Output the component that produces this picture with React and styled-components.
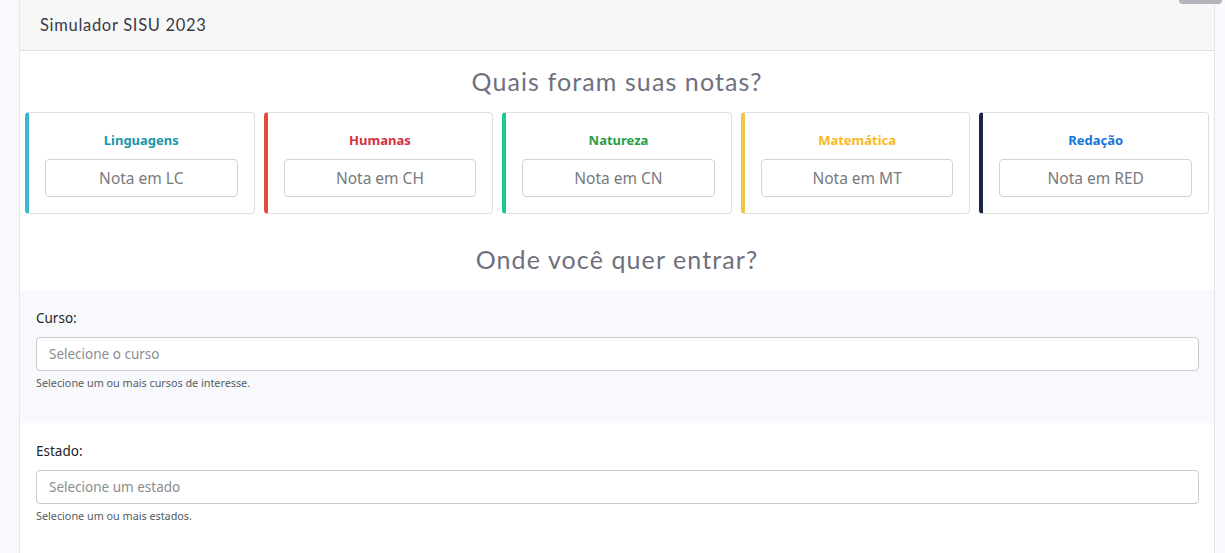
import React from "react";
import styled, { createGlobalStyle } from "styled-components";

const GlobalStyle = createGlobalStyle`
  * { box-sizing: border-box; }
  html, body { margin: 0; padding: 0; }
  body {
    background: #f8f9fc;
    font-family: "Open Sans", "Noto Sans", sans-serif;
    color: #212529;
    overflow: hidden;
  }
`;

const Page = styled.div`
  position: relative;
  height: 553px;
  padding: 0 10px 0 19px;
`;

const ScrollTab = styled.div`
  position: absolute;
  top: -4px;
  right: 3px;
  width: 43px;
  height: 8px;
  border-radius: 4px;
  background: #b3b3ba;
`;

const Card = styled.div`
  background: #fff;
  border: 1px solid #e3e6f0;
  border-top: none;
  height: 100%;
`;

const CardHeader = styled.div`
  height: 51px;
  background: #f7f7f7;
  border-bottom: 1px solid #dedede;
  display: flex;
  align-items: center;
  padding: 0 20px;
  font-family: "Lato", "Open Sans", sans-serif;
  font-size: 16.5px;
  color: #3a3b45;
  letter-spacing: 0.7px;
`;

const SectionTitle = styled.h2`
  margin: 0;
  text-align: center;
  font-family: "Lato", "Open Sans", sans-serif;
  font-weight: 400;
  font-size: 25px;
  letter-spacing: 1.1px;
  color: #6e707e;
  padding: ${(p) => p.$pad};
  line-height: 30px;
`;

const ScoreRow = styled.div`
  display: grid;
  grid-template-columns: repeat(5, 1fr);
  gap: 9px;
  padding: 0 5px;
`;

const ScoreCard = styled.div`
  border: 1px solid #dddfe2;
  border-left: 4px solid ${(p) => p.$accent};
  border-radius: 4px;
  padding: 17px 16px 16px 16px;
  display: flex;
  flex-direction: column;
  align-items: center;
`;

const ScoreTitle = styled.div`
  font-family: "Noto Sans", "Open Sans", sans-serif;
  font-weight: 700;
  font-size: 13px;
  line-height: 20px;
  color: ${(p) => p.$color};
  margin-bottom: 9px;
`;

const ScoreInput = styled.input`
  width: 100%;
  height: 38px;
  border: 1px solid #ced4da;
  border-radius: 4px;
  text-align: center;
  font-family: "Noto Sans", "Open Sans", sans-serif;
  font-size: 15.5px;
  color: #495057;
  background: #fff;
  &::placeholder { color: #777a7d; }
`;

const FormSection = styled.div`
  background: ${(p) => (p.$shaded ? "#f8f9fc" : "#fff")};
  padding: 18px 15px 16px 16px;
`;

const FieldGroup = styled.div`
  margin-bottom: 16px;
  display: flex;
  flex-direction: column;
`;

const Label = styled.label`
  font-family: "Noto Sans", "Open Sans", sans-serif;
  font-size: 13.5px;
  line-height: 21px;
  color: #212529;
  margin-bottom: 8px;
`;

const SelectBox = styled.input`
  width: 100%;
  height: 34px;
  border: 1px solid #c8cbcf;
  border-radius: 4px;
  padding: 0 12px;
  font-family: "Noto Sans", "Open Sans", sans-serif;
  font-size: 13.5px;
  background: #fff;
  &::placeholder { color: #8a8d91; }
`;

const Help = styled.small`
  font-family: "Noto Sans", "Open Sans", sans-serif;
  font-size: 10.8px;
  line-height: 16px;
  color: #555b62;
  margin-top: 4px;
`;

const scores = [
  { title: "Linguagens", accent: "#36b9cc", color: "#1b95a8", ph: "Nota em LC" },
  { title: "Humanas", accent: "#e74a3b", color: "#d1323f", ph: "Nota em CH" },
  { title: "Natureza", accent: "#1cc88a", color: "#2a9d45", ph: "Nota em CN" },
  { title: "Matemática", accent: "#f0c34a", color: "#f7b924", ph: "Nota em MT" },
  { title: "Redação", accent: "#1b2545", color: "#1575dc", ph: "Nota em RED" },
];

export default function App() {
  return (
    <>
      <GlobalStyle />
      <Page>
        <ScrollTab />
        <Card>
          <CardHeader>Simulador SISU 2023</CardHeader>
          <SectionTitle $pad="15px 0 16px">Quais foram suas notas?</SectionTitle>
          <ScoreRow>
            {scores.map((s) => (
              <ScoreCard key={s.title} $accent={s.accent}>
                <ScoreTitle $color={s.color}>{s.title}</ScoreTitle>
                <ScoreInput placeholder={s.ph} />
              </ScoreCard>
            ))}
          </ScoreRow>
          <SectionTitle $pad="30px 0 16px">Onde você quer entrar?</SectionTitle>
          <FormSection $shaded>
            <FieldGroup>
              <Label>Curso:</Label>
              <SelectBox placeholder="Selecione o curso" />
              <Help>Selecione um ou mais cursos de interesse.</Help>
            </FieldGroup>
          </FormSection>
          <FormSection>
            <FieldGroup>
              <Label>Estado:</Label>
              <SelectBox placeholder="Selecione um estado" />
              <Help>Selecione um ou mais estados.</Help>
            </FieldGroup>
          </FormSection>
        </Card>
      </Page>
    </>
  );
}
